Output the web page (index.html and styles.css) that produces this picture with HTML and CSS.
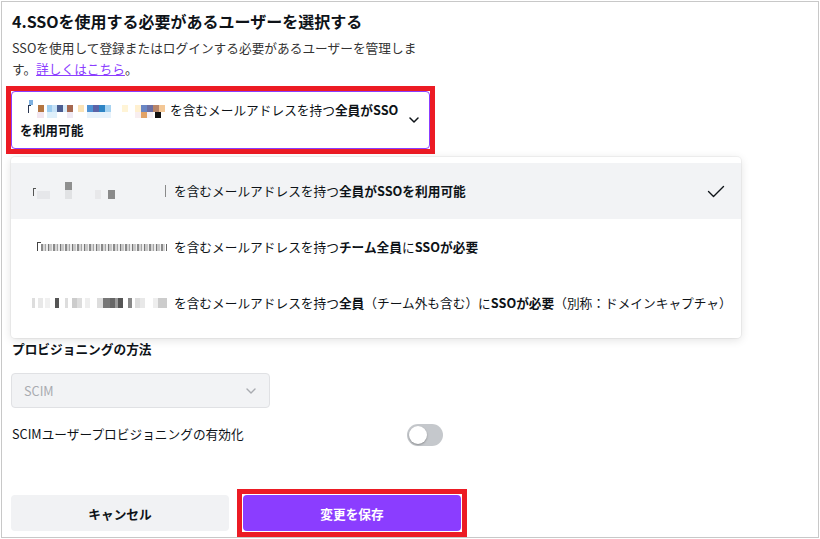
FILE: index.html
```html
<!DOCTYPE html>
<html lang="ja">
<head>
<meta charset="utf-8">
<link rel="stylesheet" href="styles.css">
</head>
<body>
<div class="frame">
  <h2 class="title">4.SSOを使用する必要があるユーザーを選択する</h2>
  <p class="desc">SSOを使用して登録またはログインする必要があるユーザーを管理します。<a href="#" class="link">詳しくはこちら</a>。</p>

  <div class="select-wrap">
    <div class="select annotated">
      <div class="select-text"><span class="mosaic m-sel"></span><span class="after-mosaic">を含むメールアドレスを持つ<b>全員がSSOを利用可能</b></span></div>
      <svg class="chev" width="10" height="6" viewBox="0 0 10 6"><path d="M1 1l4 4 4-4" fill="none" stroke="#0e1318" stroke-width="1.5" stroke-linecap="round" stroke-linejoin="round"/></svg>
    </div>
    <ul class="menu">
      <li class="item active">
        <span class="mosaic m-1"></span><span class="item-text">を含むメールアドレスを持つ<b>全員がSSOを利用可能</b></span>
        <svg class="check" width="18" height="13" viewBox="0 0 18 13"><path d="M1.5 6.5l5 5L16.5 1.5" fill="none" stroke="#0e1318" stroke-width="1.4" stroke-linecap="round" stroke-linejoin="round"/></svg>
      </li>
      <li class="item">
        <span class="mosaic m-2"></span><span class="item-text">を含むメールアドレスを持つ<b>チーム全員</b>に<b>SSOが必要</b></span>
      </li>
      <li class="item">
        <span class="mosaic m-3"></span><span class="item-text">を含むメールアドレスを持つ<b>全員</b>（チーム外も含む）に<b>SSOが必要</b>（別称：ドメインキャプチャ）</span>
      </li>
    </ul>
  </div>

  <div class="field">
    <div class="field-label">プロビジョニングの方法</div>
    <div class="select-disabled">
      <span>SCIM</span>
      <svg width="10" height="6" viewBox="0 0 10 6"><path d="M1 1l4 4 4-4" fill="none" stroke="#a9abb0" stroke-width="1.4" stroke-linecap="round" stroke-linejoin="round"/></svg>
    </div>
  </div>

  <div class="toggle-row">
    <span class="toggle-label">SCIMユーザープロビジョニングの有効化</span>
    <span class="toggle"></span>
  </div>

  <div class="actions">
    <button class="btn btn-cancel">キャンセル</button>
    <button class="btn btn-save annotated">変更を保存</button>
  </div>
</div>
</body>
</html>
```

FILE: styles.css
```css
* { box-sizing: border-box; }

body {
  margin: 0;
  background: #fff;
  font-family: "Noto Sans CJK JP", "Noto Sans", sans-serif;
  color: #0e1318;
}

.frame {
  margin: 1px;
  width: 818px;
  height: 537px;
  border: 1px solid #c8c8c8;
  padding: 7px 9px 0 9px;
  overflow: hidden;
  position: relative;
}

.title {
  margin: 0;
  font-size: 16px;
  line-height: 24px;
  font-weight: 700;
  padding-left: 1px;
}

.desc {
  margin: 4px 0 0 0;
  width: 414px;
  padding-left: 1px;
  font-size: 12.7px;
  line-height: 21px;
  color: #333;
}

.link {
  color: #8b3dff;
  text-decoration: underline;
}

.select-wrap {
  position: relative;
  margin-top: 12px;
  width: 419px;
}

.select {
  display: flex;
  align-items: center;
  gap: 5px;
  border: 1px solid #8b3dff;
  border-radius: 4px;
  padding: 8px 10px 8px 8px;
  font-size: 12.7px;
  line-height: 20px;
  background: #fff;
}

.select-text { flex: 1; }

.select-text b, .item-text b { font-weight: 700; }

.chev { flex: none; }

.annotated { position: relative; }
.annotated::after {
  content: "";
  position: absolute;
  inset: -6px;
  border: 5px solid #ec1b24;
  pointer-events: none;
}

/* mosaics (blurred addresses) */
.mosaic {
  display: inline-block;
  vertical-align: top;
  background-repeat: no-repeat;
}

.m-sel {
  width: 138px;
  height: 18px;
  margin-left: 7px;
  margin-right: 5px;
  background-image:
    linear-gradient(#7db0e0, #7db0e0),
    linear-gradient(#2a3550, #2a3550),
    linear-gradient(#2a3550, #2a3550),
    linear-gradient(90deg, transparent 0 11px, #b47540 11px 17px, transparent 17px 20px, #9dcdf0 20px 25px, #c6e2f7 25px 30px, #4b5d91 30px 36px, #d8ecfa 36px 40px, #a5674f 40px 46px, transparent 46px 51px, #fae3b7 51px 57px, transparent 57px 60px, #4f92d3 60px 66px, #5b63a7 66px 72px, #2d84c4 72px 78px, #a7d3f1 78px 84px, transparent 84px 95px, #fff4d6 95px 101px, transparent 101px 108px, #fff0d0 108px 114px, #6a86c4 114px 120px, #6b6fa3 120px 126px, #b88569 126px 132px, #f3c796 132px 138px),
    linear-gradient(90deg, transparent 0 10px, #f2e6f0 10px 17px, transparent 17px 20px, #dff0fb 20px 30px, transparent 30px 40px, #f0eaf4 40px 46px, transparent 46px 60px, #e7f2fb 60px 84px, transparent 84px 108px, #f8eef0 108px 114px, #e2a266 114px 120px, #f6f0f4 120px 126px, transparent 126px 128px, #111 128px 134px, transparent 134px);
  background-size: 4px 5px, 1px 8px, 3px 1px, 138px 7px, 138px 6px;
  background-position: 2px 0, 1px 5px, 1px 5px, 0 5px, 0 12px;
}

.menu {
  position: absolute;
  top: calc(100% + 8px);
  left: 0;
  width: 730px;
  margin: 0;
  padding: 6px 0 7px;
  list-style: none;
  background: #fff;
  border-radius: 4px;
  box-shadow: 0 0 0 1px rgba(0, 0, 0, 0.04), 0 2px 10px rgba(0, 0, 0, 0.12);
  z-index: 5;
}

.item {
  display: flex;
  align-items: center;
  height: 56px;
  padding: 0 16px 0 21px;
  font-size: 12.7px;
  line-height: 20px;
  white-space: nowrap;
}

.item.active { background: #f2f3f5; }

.item .mosaic {
  vertical-align: middle;
  width: 138px;
  margin-right: 4px;
  flex: none;
}

.check { margin-left: auto; flex: none; }

.m-1 {
  height: 18px;
  background-image:
    linear-gradient(#555, #555),
    linear-gradient(#555, #555),
    linear-gradient(#e6e7ea, #e6e7ea),
    linear-gradient(#8f8f8f, #8f8f8f),
    linear-gradient(#e1e2e4, #e1e2e4),
    linear-gradient(#e8e8ea, #e8e8ea),
    linear-gradient(#8a8a8a, #8a8a8a),
    linear-gradient(#8a8a8a, #8a8a8a);
  background-size: 1px 8px, 3px 1px, 13px 8px, 7px 8px, 7px 9px, 6px 9px, 7px 9px, 1px 12px;
  background-position: 1px 6px, 1px 6px, 5px 9px, 33px 0, 33px 8px, 63px 8px, 76px 8px, 133px 3px;
}

.m-2 {
  height: 10px;
  background-image:
    linear-gradient(#444, #444),
    linear-gradient(#444, #444),
    repeating-linear-gradient(90deg, #8a8a8a 0 2px, #d6d6d6 2px 4px, #a4a4a4 4px 5px, #ececec 5px 7px, #777 7px 8px, #c8c8c8 8px 11px, #f0f0f0 11px 12px),
    linear-gradient(#666, #666);
  background-size: 1px 9px, 4px 1px, 124px 7px, 1px 7px;
  background-position: 5px 0, 5px 0, 9px 2px, 134px 2px;
}

.m-3 {
  height: 10px;
  background-image: linear-gradient(90deg, #ddd 0 3px, transparent 3px 6px, #e8e8e8 6px 11px, transparent 11px 13px, #f0f0f0 13px 18px, transparent 18px 23px, #555 23px 27px, transparent 27px 33px, #ddd 33px 36px, transparent 36px 40px, #ccc 40px 45px, #ddd 45px 50px, transparent 50px 53px, #eee 53px 58px, transparent 58px 65px, #ddd 65px 71px, #777 71px 78px, #666 78px 83px, #999 83px 86px, #555 86px 91px, transparent 91px 96px, #888 96px 100px, transparent 100px 103px, #ddd 103px 108px, #e8e8e8 108px 113px, transparent 113px 121px, #eee 121px 126px, #ccc 126px 135px, transparent 135px);
  background-size: 138px 10px;
}

.field { margin-top: 190px; }

.field-label {
  font-size: 12.7px;
  line-height: 20px;
  font-weight: 700;
  padding-left: 1px;
}

.select-disabled {
  margin-top: 14px;
  width: 259px;
  height: 35px;
  display: flex;
  align-items: center;
  justify-content: space-between;
  padding: 0 13px 0 12px;
  background: #f2f3f5;
  border: 1px solid #e0e1e4;
  border-radius: 4px;
  color: #a9abb0;
  font-size: 12.7px;
}

.toggle-row {
  margin-top: 16px;
  width: 432px;
  height: 22px;
  display: flex;
  align-items: center;
  justify-content: space-between;
}

.toggle-label {
  font-size: 12.7px;
  line-height: 20px;
  padding-left: 1px;
  margin-top: -3px;
}

.toggle {
  position: relative;
  width: 36px;
  height: 22px;
  border-radius: 11px;
  background: #c5c8cc;
}

.toggle::after {
  content: "";
  position: absolute;
  left: 2px;
  top: 2px;
  width: 18px;
  height: 18px;
  border-radius: 50%;
  background: #fff;
  box-shadow: 0 1px 2px rgba(0, 0, 0, 0.3);
}

.actions {
  margin-top: 49px;
  display: flex;
  gap: 14px;
}

.btn {
  width: 218px;
  height: 36px;
  border: none;
  border-radius: 4px;
  font-family: inherit;
  font-size: 12.7px;
  font-weight: 700;
  padding: 0;
}

.btn-cancel {
  background: #f1f2f4;
  color: #0e1318;
}

.btn-save {
  background: #8b3dff;
  color: #fff;
}
```
